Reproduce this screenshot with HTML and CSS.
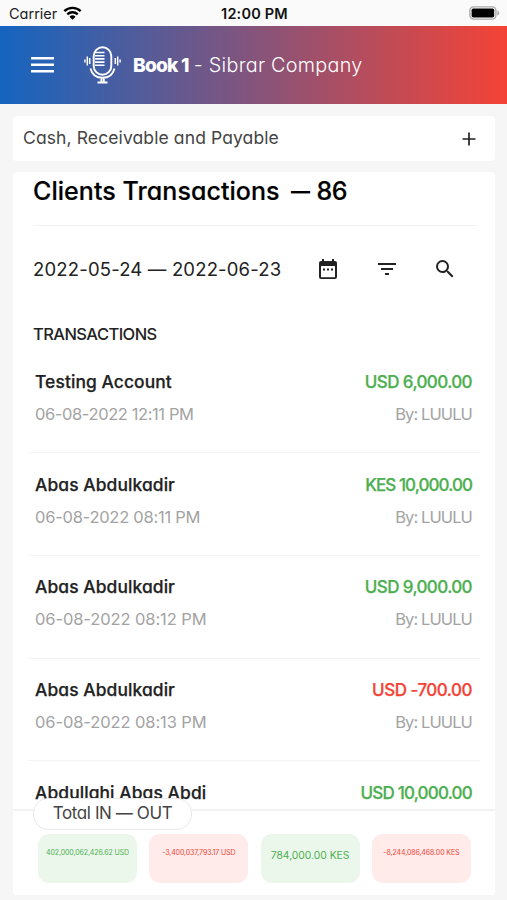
FILE: index.html
```html
<!DOCTYPE html>
<html lang="en">
<head>
<meta charset="utf-8">
<title>Clients Transactions</title>
<link rel="stylesheet" href="styles.css">
</head>
<body>
<div class="screen">
  <div class="status">
    <div class="carrier"><span>Carrier</span>
      <svg width="19" height="14" viewBox="0 0 19 14" fill="none" stroke="#000" stroke-width="2.4"><path d="M1.3 5.2a11.8 11.8 0 0 1 16.4 0M4.3 8.3a7.6 7.6 0 0 1 10.4 0"/><path d="M9.5 13.8 6.5 10.8a4.3 4.3 0 0 1 6 0z" fill="#000" stroke="none"/></svg>
    </div>
    <div class="clock">12:00 PM</div>
    <svg class="battery" width="31" height="14" viewBox="0 0 31 14"><rect x=".9" y=".9" width="26" height="12.2" rx="3.5" fill="#fff" stroke="#aaa" stroke-width="1.4"/><rect x="2.6" y="2.6" width="22.6" height="8.8" rx="1.6"/><path d="M28.3 4.5c2.6.8 2.6 4.2 0 5z" fill="#aaa"/></svg>
  </div>
  <header class="appbar">
    <svg class="menu" width="23" height="16" viewBox="0 0 23 16" fill="#fff"><path d="M0 0h23v2.6H0zM0 6.5h23v2.6H0zM0 12.9h23v2.6H0z"/></svg>
    <svg class="mic" width="38" height="38" viewBox="0 0 38 38" fill="none" stroke="#fff" stroke-width="1.9"><rect x="9.700" y="1.300" width="17.600" height="27.400" rx="8.800"/><path stroke-width="1.600" d="M11 6.500h9.500M11 9.700h9.500M11 12.900h9.500M11 16.100h9.500M11 19.300h9.500"/><path d="M6.500 22.500c1.500 6 6 9.300 12 9.300s10.500-3.300 12-9.300M17.400 32v4M19.800 32v4M13.500 36.500h10"/><path stroke-width="1.500" d="M.9 13.500v3M3.300 10.500v9M5.700 12v6M31.300 12v6M33.700 10.500v9M36.100 13.500v3"/></svg>
    <div class="book"><b>Book 1</b><span>- Sibrar Company</span></div>
  </header>
  <section class="summary"><span class="summary-label">Cash, Receivable and Payable</span>
    <svg width="14" height="14" viewBox="0 0 14 14" stroke="#222" stroke-width="1.7"><path d="M.5 7h13M7 .5v13"/></svg>
  </section>
  <main class="card">
    <h1><span class="title">Clients Transactions</span><span class="count"><span class="dash">—</span> 86</span></h1>
    <div class="filters">
      <span class="range">2022-05-24 — 2022-06-23</span>
      <svg class="cal" width="24" height="24" viewBox="0 0 24 24" fill="#222"><path d="M7 11.500h2v2H7zm4 0h2v2h-2zm4 0h2v2h-2zM19 4h-1V2h-2v2H8V2H6v2H5a2 2 0 0 0-2 2v14a2 2 0 0 0 2 2h14a2 2 0 0 0 2-2V6a2 2 0 0 0-2-2zm0 16.300H5V9h14z"/></svg>
      <svg class="fil" width="24" height="24" viewBox="0 0 24 24" fill="#222"><path d="M10 18h4v-2h-4zM3 6v2h18V6zm3 7h12v-2H6z"/></svg>
      <svg class="sea" width="24" height="24" viewBox="0 0 24 24" fill="#222"><path d="M15.500 14h-.79l-.28-.27A6.470 6.470 0 0 0 16 9.500 6.500 6.500 0 1 0 9.500 16c1.610 0 3.090-.59 4.230-1.570l.27.28v.79l5 4.990L20.490 19zm-6 0a4.500 4.500 0 1 1 0-9 4.500 4.500 0 0 1 0 9z"/></svg>
    </div>
    <h2>TRANSACTIONS</h2>
    <div class="list">
      <article class="row"><div class="line"><b class="name">Testing Account</b><b class="amount">USD 6,000.00</b></div><div class="line meta"><span class="date ones">06-08-2022 12:11 PM</span><span class="by">By: LUULU</span></div></article>
      <article class="row"><div class="line"><b class="name">Abas Abdulkadir</b><b class="amount wide">KES 10,000.00</b></div><div class="line meta"><span class="date one">06-08-2022 08:11 PM</span><span class="by">By: LUULU</span></div></article>
      <article class="row"><div class="line"><b class="name">Abas Abdulkadir</b><b class="amount">USD 9,000.00</b></div><div class="line meta"><span class="date">06-08-2022 08:12 PM</span><span class="by">By: LUULU</span></div></article>
      <article class="row"><div class="line"><b class="name">Abas Abdulkadir</b><b class="amount out">USD -700.00</b></div><div class="line meta"><span class="date">06-08-2022 08:13 PM</span><span class="by">By: LUULU</span></div></article>
      <article class="row"><div class="line"><b class="name">Abdullahi Abas Abdi</b><b class="amount last">USD 10,000.00</b></div></article>
    </div>
    <footer class="totals">
      <div class="pill">Total IN — OUT</div>
      <div class="chip tiny">402,000,062,426.62 USD</div>
      <div class="chip neg tiny">-3,400,037,793.17 USD</div>
      <div class="chip">784,000.00 KES</div>
      <div class="chip neg tiny">-8,244,086,468.00 KES</div>
    </footer>
  </main>
</div>
</body>
</html>
```
FILE: styles.css
```css
* { box-sizing: border-box; }
body { margin: 0; background: #f6f6f6; color: #222; font-family: Inter, "Open Sans", sans-serif; font-feature-settings: "cv11"; white-space: nowrap; }
svg { display: block; flex: none; }
.screen { width: 507px; height: 900px; overflow: hidden; display: flex; flex-direction: column; }
.status { height: 25.5px; flex: none; background: #fafafa; display: grid; grid-template-columns: 1fr auto 1fr; align-items: center; padding: 1px 7px 0 9px; font-size: 14.5px; color: #222; }
.carrier { display: flex; align-items: center; gap: 6px; }
.clock { font-weight: 600; font-size: 14.5px; letter-spacing: .2px; color: #111; }
.battery { justify-self: end; }
.appbar { height: 78px; flex: none; background: linear-gradient(90deg, #1565c0, #f44336); display: flex; align-items: center; color: #fff; padding-left: 31px; }
.mic { margin-left: 30px; }
.book { margin-left: 11px; display: flex; gap: 5px; font-size: 19.8px; font-weight: 300; letter-spacing: .27px; }
.book b { font-weight: 800; font-size: 19.2px; letter-spacing: -.8px; }
.summary { height: 45px; flex: none; margin: 12.5px 12px 0 13px; padding: 0 19px 0 10px; background: #fff; border-radius: 4px; display: flex; align-items: center; justify-content: space-between; font-size: 17.5px; color: #444; }
.summary-label { letter-spacing: .11px; margin-top: -2px; }
.card { height: 723px; flex: none; margin: 11px 12px 0 13px; background: #fff; border-radius: 4px; display: flex; flex-direction: column; }
h1 { margin: 0 18px 0 20px; height: 54px; flex: none; border-bottom: 1px solid #f2f2f2; padding-top: 4px; line-height: 31px; font-size: 25px; font-weight: 500; color: #000; display: flex; gap: 11px; letter-spacing: .06px; -webkit-text-stroke: .2px; }
.count { letter-spacing: -.4px; }
.dash { display: inline-block; transform: scaleX(.76); margin: 0 -2px 0 -3px; }
.filters { height: 88px; flex: none; display: flex; align-items: center; padding: 0 0 3px 20px; font-size: 18.5px; }
.range { width: 283px; letter-spacing: .17px; }
.fil { margin-left: 34.500px; }
.sea { margin-left: 34.500px; }
h2 { margin: 8px 0 0 20px; height: 24px; flex: none; line-height: 24px; font-size: 16.5px; font-weight: 500; letter-spacing: -.57px; }
.list { margin: 4.5px 15px 0; flex: 1; overflow: hidden; }
.row { height: 102.7px; padding: 18.5px 8px 0 7px; border-bottom: 1px solid #f4f4f4; }
.line { display: flex; justify-content: space-between; height: 32px; line-height: 26px; font-size: 17px; }
.line b { font-weight: 500; -webkit-text-stroke: .25px; }
.line .name { font-size: 17.4px; letter-spacing: .1px; }
.line .amount { color: #4caf50; letter-spacing: -.6px; }
.line .wide { letter-spacing: -.93px; }
.line .last { letter-spacing: -.78px; }
.line .amount.out { color: #f44336; letter-spacing: -.5px; }
.meta { color: #a3a3a3; font-size: 16.5px; letter-spacing: -.1px; }
.date.one { letter-spacing: -.25px; }
.date.ones { letter-spacing: -.4px; }
.by { letter-spacing: -.9px; }
.totals { position: relative; height: 86px; flex: none; border-top: 2px solid #f2f2f2; padding: 23px 25px 0; display: grid; grid-template-columns: repeat(4, 99px); gap: 12.3px; background: #fff; border-radius: 0 0 4px 4px; }
.pill { position: absolute; left: 20px; top: -13.500px; width: 159px; height: 32px; border: 1px solid #e9e9e9; border-radius: 15px; background: #fff; text-align: center; line-height: 29px; font-size: 17px; letter-spacing: -.4px; color: #444; }
.chip { height: 49px; border-radius: 11px; background: #ebf7eb; color: #4caf50; text-align: center; line-height: 42px; font-size: 10.300px; }
.chip.neg { background: #feebea; color: #f44336; }
.chip.tiny { font-size: 7px; line-height: 37px; letter-spacing: -.1px; }
```
